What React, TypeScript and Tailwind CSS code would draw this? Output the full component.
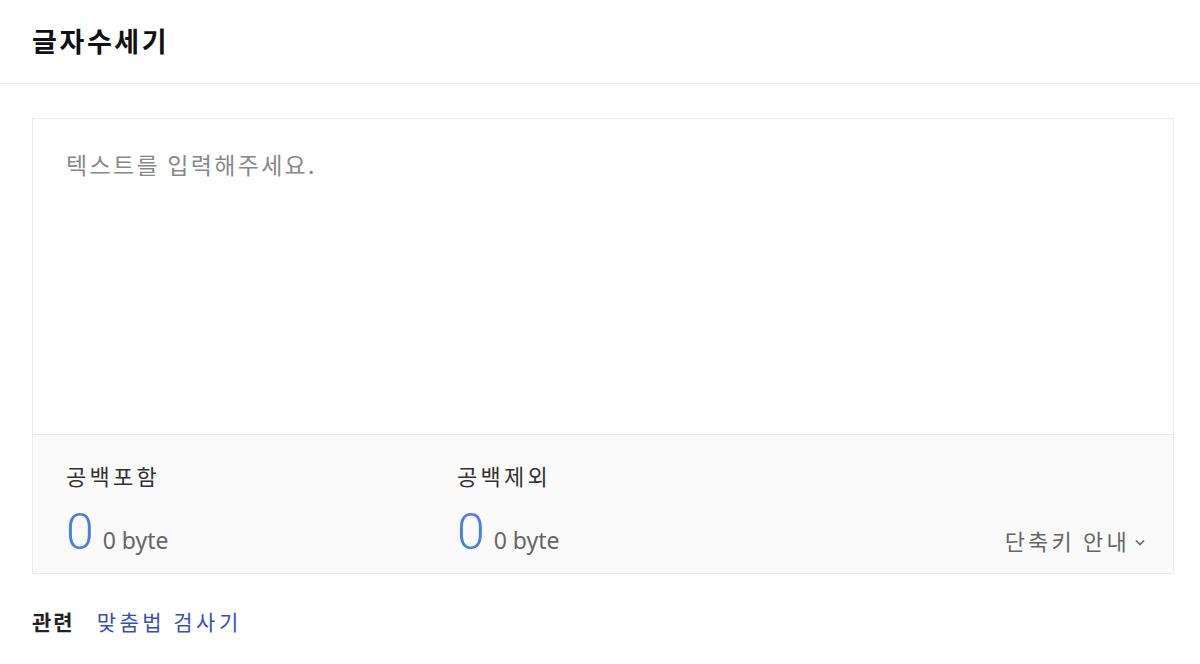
const font = { fontFamily: '"Noto Sans CJK KR", "Noto Sans", sans-serif' };
const latin = { fontFamily: '"Noto Sans", "Noto Sans CJK KR", sans-serif' };

function Stat({ label }: { label: string }) {
  return (
    <div className="flex flex-col">
      <span className="text-[22px] leading-[28px] tracking-[3.3px] text-[#333]">{label}</span>
      <div className="flex items-baseline gap-[9px] mt-[17px]">
        <span
          className="text-[50px] leading-[52px] font-light text-[#4a7df0]"
          style={{ fontFamily: 'Roboto, "Liberation Sans", sans-serif' }}
        >
          0
        </span>
        <span className="text-[23px] text-[#666]" style={latin}>
          0 byte
        </span>
      </div>
    </div>
  );
}

export default function App() {
  return (
    <div className="w-[1200px] h-[664px] bg-white" style={font}>
      <header className="h-[84px] px-8 flex items-center border-b border-[#ececec]">
        <h1 className="text-[27px] font-bold text-[#111] tracking-[2.6px]">글자수세기</h1>
      </header>

      <div className="ml-8 mr-[26px] mt-[34px] border border-[#ebebeb]">
        <textarea
          className="block w-full h-[315px] resize-none px-[33px] pt-[27px] text-[23px] leading-[36px] tracking-[2.3px] text-[#333] placeholder:text-[#888] outline-none bg-white"
          placeholder="텍스트를 입력해주세요."
          style={font}
        />
        <div className="h-[139px] bg-[#fafafa] border-t border-[#ebebeb] pl-[33px] pr-[27px] pt-[26px] flex items-start">
          <div className="w-[391px]">
            <Stat label="공백포함" />
          </div>
          <Stat label="공백제외" />
          <button className="ml-auto mt-[63px] flex items-center gap-[4px] text-[22px] tracking-[3.2px] text-[#666]">
            단축키 안내
            <svg width="12" height="12" viewBox="0 0 12 12" fill="none" stroke="#666" strokeWidth="1.7" className="mt-[2px]">
              <path d="M2 4.5 L6 8.5 L10 4.5" />
            </svg>
          </button>
        </div>
      </div>

      <div className="ml-8 mt-[32px] flex items-center gap-[22px] text-[21px]">
        <span className="font-bold text-[#222] tracking-[2px]">관련</span>
        <a className="text-[#3a4cc4] tracking-[3.5px]">맞춤법 검사기</a>
      </div>
    </div>
  );
}
